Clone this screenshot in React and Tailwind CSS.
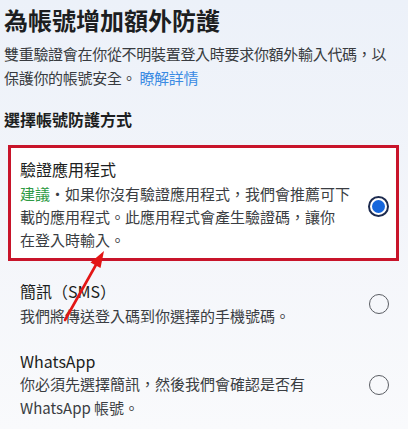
import React from "react";

function Radio({ selected }) {
  if (selected) {
    return (
      <div className="w-[21px] h-[21px] rounded-full border-[2px] border-[#1d2b4f] flex items-center justify-center shrink-0">
        <div className="w-[13px] h-[13px] rounded-full bg-[#1566dc]" />
      </div>
    );
  }
  return <div className="w-[20px] h-[20px] rounded-full border-[1.5px] border-[#5a5d63] shrink-0" />;
}

export default function App() {
  return (
    <div className="relative w-[408px] h-[429px] overflow-hidden bg-gradient-to-b from-[#ecf1f9] via-[#f3f5fa] to-[#f9fafc] font-['Noto_Sans_CJK_TC','Noto_Sans',sans-serif] text-[#1c1e21]">
      <div className="px-[4px] pt-[4px]">
        <h1 className="text-[24px] leading-[32px] font-semibold">為帳號增加額外防護</h1>
        <p className="mt-[6px] text-[15px] leading-[24px] text-[#383b40] whitespace-nowrap tracking-[-0.3px]">
          雙重驗證會在你從不明裝置登入時要求你額外輸入代碼，以
          <br />
          保護你的帳號安全。 <span className="text-[#3a8be3]">瞭解詳情</span>
        </p>
        <h2 className="mt-[17px] text-[16px] leading-[24px] font-semibold">選擇帳號防護方式</h2>
      </div>

      <div className="ml-[8px] mt-[14px] w-[391px] h-[116px] border-[3px] border-[#c8142a] bg-white flex items-center pl-[9px] pr-[7px]">
        <div className="flex-1 pt-[1px]">
          <div className="text-[16px] leading-[24px] text-[#1c1e21]">驗證應用程式</div>
          <div className="mt-[1px] text-[15px] leading-[23px] text-[#3a3d42] whitespace-nowrap">
            <span className="text-[#2e9b45]">建議</span>・如果你沒有驗證應用程式，我們會推薦可下
            <br />
            載的應用程式。此應用程式會產生驗證碼，讓你
            <br />
            在登入時輸入。
          </div>
        </div>
        <div className="mt-[6px]">
          <Radio selected />
        </div>
      </div>

      <div className="ml-[8px] mt-[18px] w-[391px] flex items-center pl-[12px] pr-[10px]">
        <div className="flex-1">
          <div className="text-[16px] leading-[24px]">簡訊（SMS）</div>
          <div className="mt-[1px] text-[15px] leading-[24px] text-[#3a3d42]">我們將傳送登入碼到你選擇的手機號碼。</div>
        </div>
        <Radio />
      </div>

      <div className="ml-[8px] mt-[21px] w-[391px] flex items-center pl-[12px] pr-[10px]">
        <div className="flex-1">
          <div className="text-[16px] leading-[24px]">WhatsApp</div>
          <div className="mt-[-1px] text-[15px] leading-[24px] text-[#3a3d42] whitespace-nowrap">
            你必須先選擇簡訊，然後我們會確認是否有
            <br />
            WhatsApp 帳號。
          </div>
        </div>
        <Radio />
      </div>

      <svg className="absolute left-0 top-0 pointer-events-none" width="408" height="429" viewBox="0 0 408 429">
        <line x1="65" y1="320" x2="97" y2="263" stroke="#e31616" strokeWidth="2.6" strokeLinecap="round" />
        <polygon points="104,251 100.5,268 90.5,262.5" fill="#e31616" />
      </svg>
    </div>
  );
}
